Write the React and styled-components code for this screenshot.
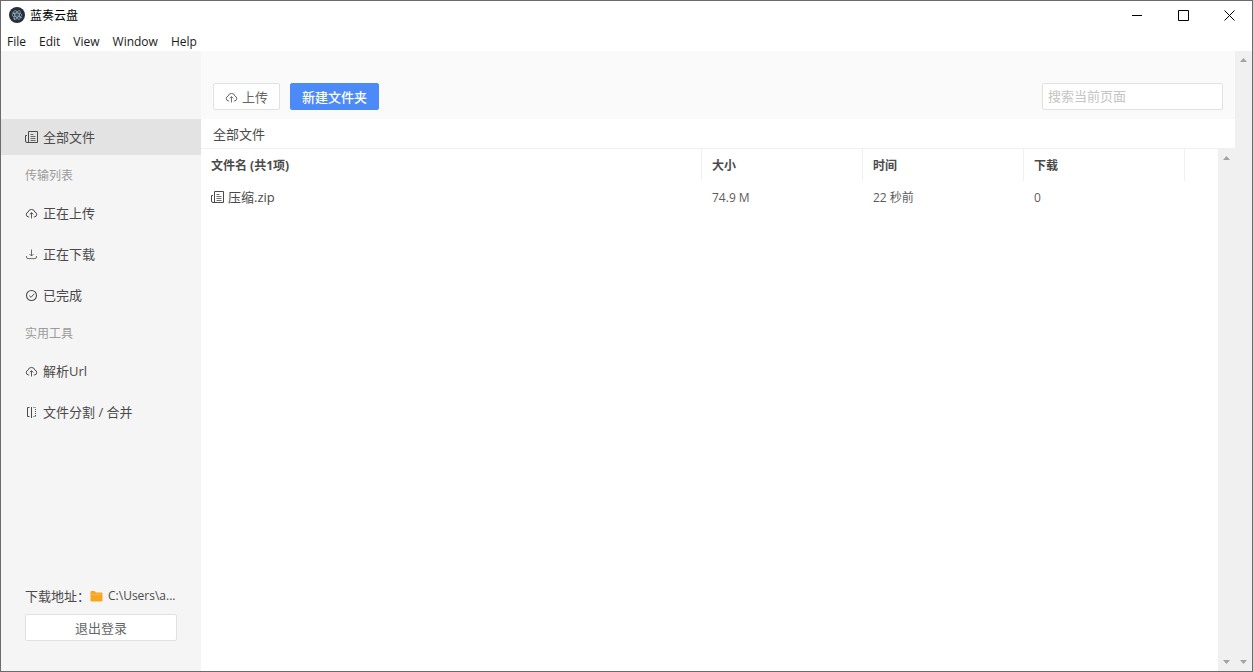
import React from 'react';
import styled, { createGlobalStyle } from 'styled-components'

const GlobalStyle = createGlobalStyle`
    * {
        box-sizing: border-box;
    }
    body {
        margin: 0;
        font-family: 'Open Sans', 'Noto Sans CJK SC', sans-serif;
        font-size: 13px;
        line-height: 20px;
        color: #4a4a4a;
    }
    button, input {
        font: inherit;
        margin: 0;
    }
`
const Window = styled.div`
    height: 100vh;
    display: flex;
    flex-direction: column;
    border: 1px solid #6c6a6b;
    background-color: white;
    overflow: hidden;
`
const TitleBar = styled.header`
    height: 28px;
    flex: none;
    display: flex;
    align-items: center;
    padding-left: 8px;
    color: black;
`
const Title = styled.h1`
    flex: 1;
    margin: 0 0 0 5px;
    padding-top: 2px;
    font-size: 12px;
    font-weight: 400;
    line-height: 20px;
`
const WindowButton = styled.button`
    width: 46px;
    height: 28px;
    padding: 0;
    border: 0;
    display: flex;
    align-items: center;
    justify-content: center;
    background: none;
    color: black;
`
const MenuBar = styled.nav`
    height: 22px;
    flex: none;
    display: flex;
    gap: 13px;
    padding-left: 6px;
`
const MenuItem = styled.button`
    padding: 4px 0 0;
    border: 0;
    background: none;
    color: #1a1a1a;
    font-size: 12px;
    line-height: 18px;
`
const Body = styled.div`
    flex: 1;
    min-height: 0;
    display: flex;
`
const Sidebar = styled.aside`
    width: 200px;
    flex: none;
    display: flex;
    flex-direction: column;
    padding-top: 68px;
    background-color: #f5f5f5;
`
const NavList = styled.nav`
    flex: 1;
    display: flex;
    flex-direction: column;
`
const NavGroup = styled.div`
    display: flex;
    flex-direction: column;
`
const NavItems = styled.div`
    display: flex;
    flex-direction: column;
    gap: 5px;
`
const GroupTitle = styled.h2`
    height: 40px;
    margin: 0;
    padding: 11px 0 0 24px;
    font-size: 12px;
    font-weight: 400;
    line-height: 20px;
    color: #9b9b9b;
`
const NavItem = styled.a`
    height: 36px;
    display: flex;
    align-items: center;
    gap: 4px;
    padding-left: 24px;
    color: #4a4a4a;
    text-decoration: none;
    background-color: ${props => props.$active ? '#e3e3e3' : 'transparent'};
`
const SidebarFooter = styled.div`
    display: flex;
    flex-direction: column;
    gap: 8px;
    padding: 0 24px 30px;
`
const DownloadPath = styled.div`
    display: flex;
    align-items: center;
`
const PathLink = styled.a`
    display: flex;
    align-items: center;
    gap: 5px;
    font-size: 12px;
    color: #4a4a4a;
    text-decoration: none;
`
const Button = styled.button`
    height: 27px;
    display: flex;
    align-items: center;
    justify-content: center;
    gap: 3px;
    padding: 0 11px;
    border: 1px solid ${props => props.$primary ? '#4c8af8' : '#e1e1e1'};
    border-radius: 2px;
    background-color: ${props => props.$primary ? '#4c8af8' : 'white'};
    color: ${props => props.$primary ? 'white' : '#666666'};
    font-weight: ${props => props.$primary ? 500 : 400};
    white-space: nowrap;
`
const Content = styled.main`
    flex: 1;
    min-width: 0;
    display: flex;
    flex-direction: column;
`
const Toolbar = styled.div`
    flex: none;
    display: flex;
    justify-content: space-between;
    padding: 32px 12px 9px;
    background-color: #fafafa;
`
const Actions = styled.div`
    display: flex;
    gap: 10px;
`
const Search = styled.input`
    width: 181px;
    height: 27px;
    padding: 0 5px 2px;
    border: 1px solid #e1e1e1;
    border-radius: 2px;
    background-color: white;
    &::placeholder {
        color: #c4c4c4;
    }
`
const Breadcrumb = styled.div`
    height: 30px;
    flex: none;
    padding-left: 12px;
    border-bottom: 1px solid #f0f0f0;
    line-height: 30px;
`
const ListArea = styled.div`
    flex: 1;
    min-height: 0;
    display: flex;
`
const TableWrap = styled.div`
    flex: 1;
    min-width: 0;
`
const Table = styled.table`
    width: 100%;
    table-layout: fixed;
    border-collapse: separate;
    border-spacing: 0;
    font-size: 12px;
`
const Col = styled.col`
    width: ${props => props.$width};
`
const HeadCell = styled.th`
    height: 32px;
    padding: 2px 10px 0;
    border-right: ${props => props.$last ? '0' : '1px solid #f0f0f0'};
    text-align: left;
    font-weight: 700;
`
const Cell = styled.td`
    height: 32px;
    padding: ${props => props.$name ? '0 10px' : '2px 10px 0'};
    color: #5c5c5c;
`
const FileName = styled.span`
    display: flex;
    align-items: center;
    gap: 3px;
    font-size: 13px;
    color: #4a4a4a;
`
const ScrollTrack = styled.div`
    width: 17px;
    flex: none;
    display: flex;
    flex-direction: column;
    justify-content: space-between;
    align-items: center;
    padding: 7px 0;
    background-color: #f0f0f0;
`
const Icon = styled.svg`
    display: block;
    flex: none;
    fill: none;
    stroke: currentColor;
`

function LogoIcon() {
    return (
        <Icon width="16" height="16" viewBox="0 0 16 16">
            <circle cx="8" cy="8" r="8" fill="#2b2e3a" stroke="none" />
            <g stroke="#9fc9d4" strokeWidth="0.6">
                <ellipse cx="8" cy="8" rx="5" ry="2" />
                <ellipse cx="8" cy="8" rx="5" ry="2" transform="rotate(60 8 8)" />
                <ellipse cx="8" cy="8" rx="5" ry="2" transform="rotate(120 8 8)" />
            </g>
            <g fill="#9fc9d4" stroke="none">
                <circle cx="8" cy="8" r="0.6" />
                <circle cx="4" cy="6" r="0.7" />
                <circle cx="12" cy="10.5" r="0.7" />
                <circle cx="5.5" cy="12" r="0.7" />
            </g>
        </Icon>
    )
}

function FileIcon() {
    return (
        <Icon width="14" height="14" viewBox="0 0 14 14">
            <path d="M3.5 12.5V1.5h9v11H2a1.5 1.5 0 0 1-1.5-1.5V5.5h1.5" />
            <path d="M5.5 4.5h3M5.5 6.5h5M5.5 8.5h5M5.5 10.5h5" strokeWidth="0.8" />
        </Icon>
    )
}

function CloudIcon() {
    return (
        <Icon width="14" height="14" viewBox="0 0 14 14">
            <path d="M4.2 10.9H3.5A2.4 2.4 0 0 1 3 6.2 3.6 3.6 0 0 1 10 6.2 2.4 2.4 0 0 1 9.5 10.9H8.8" />
            <path d="M6.5 12.5V6.8M4.7 8.4l1.8-1.8 1.8 1.8" strokeWidth="0.9" />
        </Icon>
    )
}

function DownloadIcon() {
    return (
        <Icon width="14" height="14" viewBox="0 0 14 14" strokeWidth="0.8">
            <path d="M6.5 2.5v6.5M4.5 7l2 2 2-2" />
            <path d="M1.5 9v1a1.6 1.6 0 0 0 1.6 1.6h6.8A1.6 1.6 0 0 0 11.5 10V9" />
        </Icon>
    )
}

function DoneIcon() {
    return (
        <Icon width="14" height="14" viewBox="0 0 14 14">
            <circle cx="6.5" cy="7.5" r="5" strokeWidth="1.1" />
            <path d="M4.2 7.6l1.8 1.8 3.2-3.6" />
        </Icon>
    )
}

function SplitIcon() {
    return (
        <Icon width="14" height="14" viewBox="0 0 14 14">
            <path d="M4.5 2.5h-2v9h2M6.5 2v11" />
            <path d="M8.5 2.5h2.5M8.5 11.5h2.5M10.5 4v7" strokeDasharray="1 1" />
        </Icon>
    )
}

function FolderIcon() {
    return (
        <Icon width="13" height="12" viewBox="0 0 13 12">
            <path d="M0.5 2a1 1 0 0 1 1-1h3l1.5 1.5H11.5a1 1 0 0 1 1 1V10.5a1 1 0 0 1-1 1H1.5a1 1 0 0 1-1-1z" fill="#f6a623" stroke="none" />
            <path d="M1 4.5h11" stroke="#fbb944" />
        </Icon>
    )
}

function Scrollbar() {
    return (
        <ScrollTrack aria-hidden="true">
            <Icon width="7" height="4" viewBox="0 0 7 4">
                <path d="M0 4L3.5 0 7 4z" fill="#a3a3a3" stroke="none" />
            </Icon>
            <Icon width="7" height="4" viewBox="0 0 7 4">
                <path d="M0 0l3.5 4L7 0z" fill="#a3a3a3" stroke="none" />
            </Icon>
        </ScrollTrack>
    )
}

const menus = ['File', 'Edit', 'View', 'Window', 'Help']

const groups = [
    {
        title: '传输列表',
        items: [
            { text: '正在上传', icon: <CloudIcon /> },
            { text: '正在下载', icon: <DownloadIcon /> },
            { text: '已完成', icon: <DoneIcon /> },
        ],
    },
    {
        title: '实用工具',
        items: [
            { text: '解析Url', icon: <CloudIcon /> },
            { text: '文件分割 / 合并', icon: <SplitIcon /> },
        ],
    },
]

const files = [
    { name: '压缩.zip', size: '74.9 M', time: '22 秒前', downloads: 0 },
]

export default function App(){

    return(
        <Window>
            <GlobalStyle />
            <TitleBar>
                <LogoIcon />
                <Title>蓝奏云盘</Title>
                <WindowButton aria-label="Minimize">
                    <Icon width="10" height="11" viewBox="0 0 10 11"><path d="M0 5.5h10" /></Icon>
                </WindowButton>
                <WindowButton aria-label="Maximize">
                    <Icon width="11" height="11" viewBox="0 0 11 11"><path d="M0.5 0.5h10v10h-10z" /></Icon>
                </WindowButton>
                <WindowButton aria-label="Close">
                    <Icon width="11" height="11" viewBox="0 0 11 11"><path d="M0.5 0.5l10 10M10.5 0.5l-10 10" /></Icon>
                </WindowButton>
            </TitleBar>
            <MenuBar>
                {menus.map(menu => <MenuItem key={menu}>{menu}</MenuItem>)}
            </MenuBar>
            <Body>
                <Sidebar>
                    <NavList>
                        <NavItem href="#files" $active><FileIcon />全部文件</NavItem>
                        {groups.map(group => (
                            <NavGroup key={group.title}>
                                <GroupTitle>{group.title}</GroupTitle>
                                <NavItems>
                                    {group.items.map(item => (
                                        <NavItem href="#" key={item.text}>{item.icon}{item.text}</NavItem>
                                    ))}
                                </NavItems>
                            </NavGroup>
                        ))}
                    </NavList>
                    <SidebarFooter>
                        <DownloadPath>
                            下载地址：
                            <PathLink href="#path"><FolderIcon />C:\Users\a...</PathLink>
                        </DownloadPath>
                        <Button>退出登录</Button>
                    </SidebarFooter>
                </Sidebar>
                <Content>
                    <Toolbar>
                        <Actions>
                            <Button><CloudIcon />上传</Button>
                            <Button $primary>新建文件夹</Button>
                        </Actions>
                        <Search type="text" placeholder="搜索当前页面" aria-label="搜索当前页面" />
                    </Toolbar>
                    <Breadcrumb>全部文件</Breadcrumb>
                    <ListArea>
                        <TableWrap>
                            <Table>
                                <colgroup>
                                    <Col $width="auto" />
                                    <Col $width="161px" />
                                    <Col $width="161px" />
                                    <Col $width="161px" />
                                    <Col $width="33px" />
                                </colgroup>
                                <thead>
                                    <tr>
                                        <HeadCell>文件名 (共{files.length}项)</HeadCell>
                                        <HeadCell>大小</HeadCell>
                                        <HeadCell>时间</HeadCell>
                                        <HeadCell>下载</HeadCell>
                                        <HeadCell $last />
                                    </tr>
                                </thead>
                                <tbody>
                                    {files.map(file => (
                                        <tr key={file.name}>
                                            <Cell $name><FileName><FileIcon />{file.name}</FileName></Cell>
                                            <Cell>{file.size}</Cell>
                                            <Cell>{file.time}</Cell>
                                            <Cell>{file.downloads}</Cell>
                                            <Cell />
                                        </tr>
                                    ))}
                                </tbody>
                            </Table>
                        </TableWrap>
                        <Scrollbar />
                    </ListArea>
                </Content>
                <Scrollbar />
            </Body>
        </Window>
    )

}
